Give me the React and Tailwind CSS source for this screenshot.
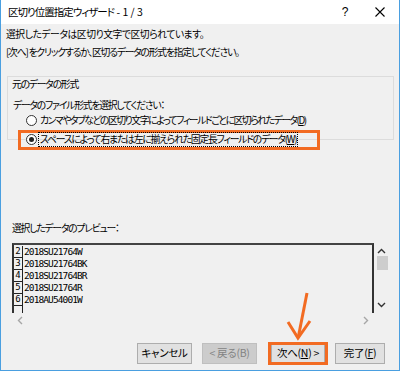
import React from "react";

const rows = [
  ["2", "2018SU21764W"],
  ["3", "2018SU21764BK"],
  ["4", "2018SU21764BR"],
  ["5", "2018SU21764R"],
  ["6", "2018AU54001W"],
];

function Radio({ checked }) {
  return (
    <span className="flex h-[11px] w-[11px] shrink-0 items-center justify-center rounded-full border border-[#333] bg-white">
      {checked && <span className="h-[5px] w-[5px] rounded-full bg-[#222]" />}
    </span>
  );
}

function Button({ children, disabled, className = "", highlight }) {
  return (
    <div
      className={
        "relative flex h-[21px] shrink-0 items-center justify-center whitespace-nowrap border text-[10.5px] leading-none tracking-[-0.3px] " +
        (disabled
          ? "border-[#bfbfbf] bg-[#cccccc] text-[#838383] "
          : "border-[#adadad] bg-[#e1e1e1] text-black ") +
        className
      }
    >
      {children}
      {highlight && (
        <span className="pointer-events-none absolute -left-[4px] -right-[4px] -top-[2px] -bottom-[2px] border-[3px] border-[#f26b22]" />
      )}
    </div>
  );
}

export default function App() {
  return (
    <div className="relative flex h-[371px] w-[400px] flex-col overflow-hidden whitespace-nowrap border-x border-b border-[#4a9fe0] bg-[#f0f0f0] font-['Noto_Sans_CJK_JP',sans-serif] text-[9.8px] tracking-[-1.2px] text-black [font-feature-settings:'palt']">
      {/* title bar */}
      <div className="flex h-[24px] shrink-0 items-center bg-white pl-[7px] text-[10.5px]">
        <span className="tracking-[-1px]">区切り位置指定ウィザード</span>
        <span className="whitespace-pre tracking-normal"> - 1 / 3</span>
        <span className="ml-auto w-[10px] text-center font-['Liberation_Sans',sans-serif] text-[12px] tracking-normal">?</span>
        <svg className="ml-[25px] mr-[14px]" width="10" height="10" viewBox="0 0 10 10">
          <path d="M0.5 0.5 L9.5 9.5 M9.5 0.5 L0.5 9.5" stroke="#000" strokeWidth="1.1" fill="none" />
        </svg>
      </div>

      {/* intro text */}
      <div className="shrink-0 pl-[5px] pt-[1px] leading-[18px]">
        <div className="h-[18px] tracking-[-0.45px]">選択したデータは区切り文字で区切られています。</div>
        <div className="h-[18px]">[次へ] をクリックするか、区切るデータの形式を指定してください。</div>
      </div>

      {/* group box */}
      <div className="ml-[6px] mt-[15px] h-[64px] w-[387px] shrink-0 border border-[#dcdcdc]">
        <div className="-mt-[11px] ml-[3px] inline-block h-[14px] bg-[#f0f0f0] px-[1px] leading-[14px]">元のデータの形式</div>
        <div className="mt-[4px] h-[18px] pl-[5px] leading-[18px]">データのファイル形式を選択してください：</div>
        <div className="ml-[18px] flex h-[13px] items-center gap-[3px] leading-[13px]">
          <Radio />
          <span className="tracking-[-1.45px]">
            カンマやタブなどの区切り文字によってフィールドごとに区切られたデータ(<span className="underline">D</span>)
          </span>
        </div>
        <div className="ml-[10px] mt-[3px] flex h-[20px] w-[302px] items-center border-[3px] border-[#f26b22] pl-[5px]">
          <Radio checked />
          <span className="ml-[1px] border border-dotted border-black px-[1px] leading-[13px]">
            スペースによって右または左に揃えられた固定長フィールドのデータ(<span className="underline">W</span>)
          </span>
        </div>
      </div>

      {/* preview */}
      <div className="mt-[79px] h-[18px] shrink-0 pl-[11px] leading-[18px]">選択したデータのプレビュー：</div>
      <div className="ml-[11px] mt-[6px] flex w-[377px] shrink-0 flex-col">
        <div className="flex">
          <div className="h-[70px] w-[362px] overflow-hidden border-l-2 border-r-2 border-t-2 border-l-[#333] border-r-[#333] border-t-[#444] bg-[#f0f0f0] pt-[1px]">
            {rows.map(([n, t]) => (
              <div key={n} className="flex h-[12px]">
                <span className="flex w-[9px] items-end justify-center border-b border-r border-[#222] font-['DejaVu_Sans_Mono',monospace] text-[9px] leading-[11px] tracking-normal">
                  {n}
                </span>
                <span className="pl-[1px] font-['DejaVu_Sans_Mono',monospace] text-[9.5px] leading-[12px] tracking-[-0.9px]">
                  {t}
                </span>
              </div>
            ))}
            <div className="h-[12px] w-[9px] border-r border-[#222]" />
          </div>
          <div className="flex w-[15px] flex-col items-center">
            <svg className="mt-[5px]" width="9" height="6" viewBox="0 0 9 6">
              <path d="M1 5 L4.5 1.5 L8 5" stroke="#333" strokeWidth="1.4" fill="none" />
            </svg>
            <div className="ml-[1px] mt-[2px] h-[14px] w-[11px] bg-[#cdcdcd]" />
            <svg className="mt-[32px]" width="9" height="6" viewBox="0 0 9 6">
              <path d="M1 1 L4.5 4.5 L8 1" stroke="#333" strokeWidth="1.4" fill="none" />
            </svg>
          </div>
        </div>
        <div className="flex h-[14px] items-center bg-[#f0f0f0] pl-[5px] pr-[20px]">
          <svg width="6" height="9" viewBox="0 0 6 9">
            <path d="M5 1 L1.5 4.5 L5 8" stroke="#a6a6a6" strokeWidth="1.4" fill="none" />
          </svg>
          <svg className="ml-auto" width="6" height="9" viewBox="0 0 6 9">
            <path d="M1 1 L4.5 4.5 L1 8" stroke="#a6a6a6" strokeWidth="1.4" fill="none" />
          </svg>
        </div>
      </div>

      {/* buttons */}
      <div className="ml-[136px] mt-[16px] flex shrink-0">
        <Button className="w-[55px]">キャンセル</Button>
        <Button disabled className="ml-[10px] w-[55px]">
          &lt; 戻る(B)
        </Button>
        <Button highlight className="ml-[14px] w-[54px]">
          次へ(<span className="underline">N</span>) &gt;
        </Button>
        <Button className="ml-[10px] w-[50px]">
          完了(<span className="underline">F</span>)
        </Button>
      </div>

      {/* annotation arrow */}
      <svg className="pointer-events-none absolute left-0 top-0" width="400" height="371" viewBox="0 0 400 371">
        <path d="M306 293 L297.5 336" stroke="#f26b22" strokeWidth="3" fill="none" />
        <path d="M287 322 L297 338 L309 321" stroke="#f26b22" strokeWidth="3" fill="none" />
      </svg>
    </div>
  );
}
